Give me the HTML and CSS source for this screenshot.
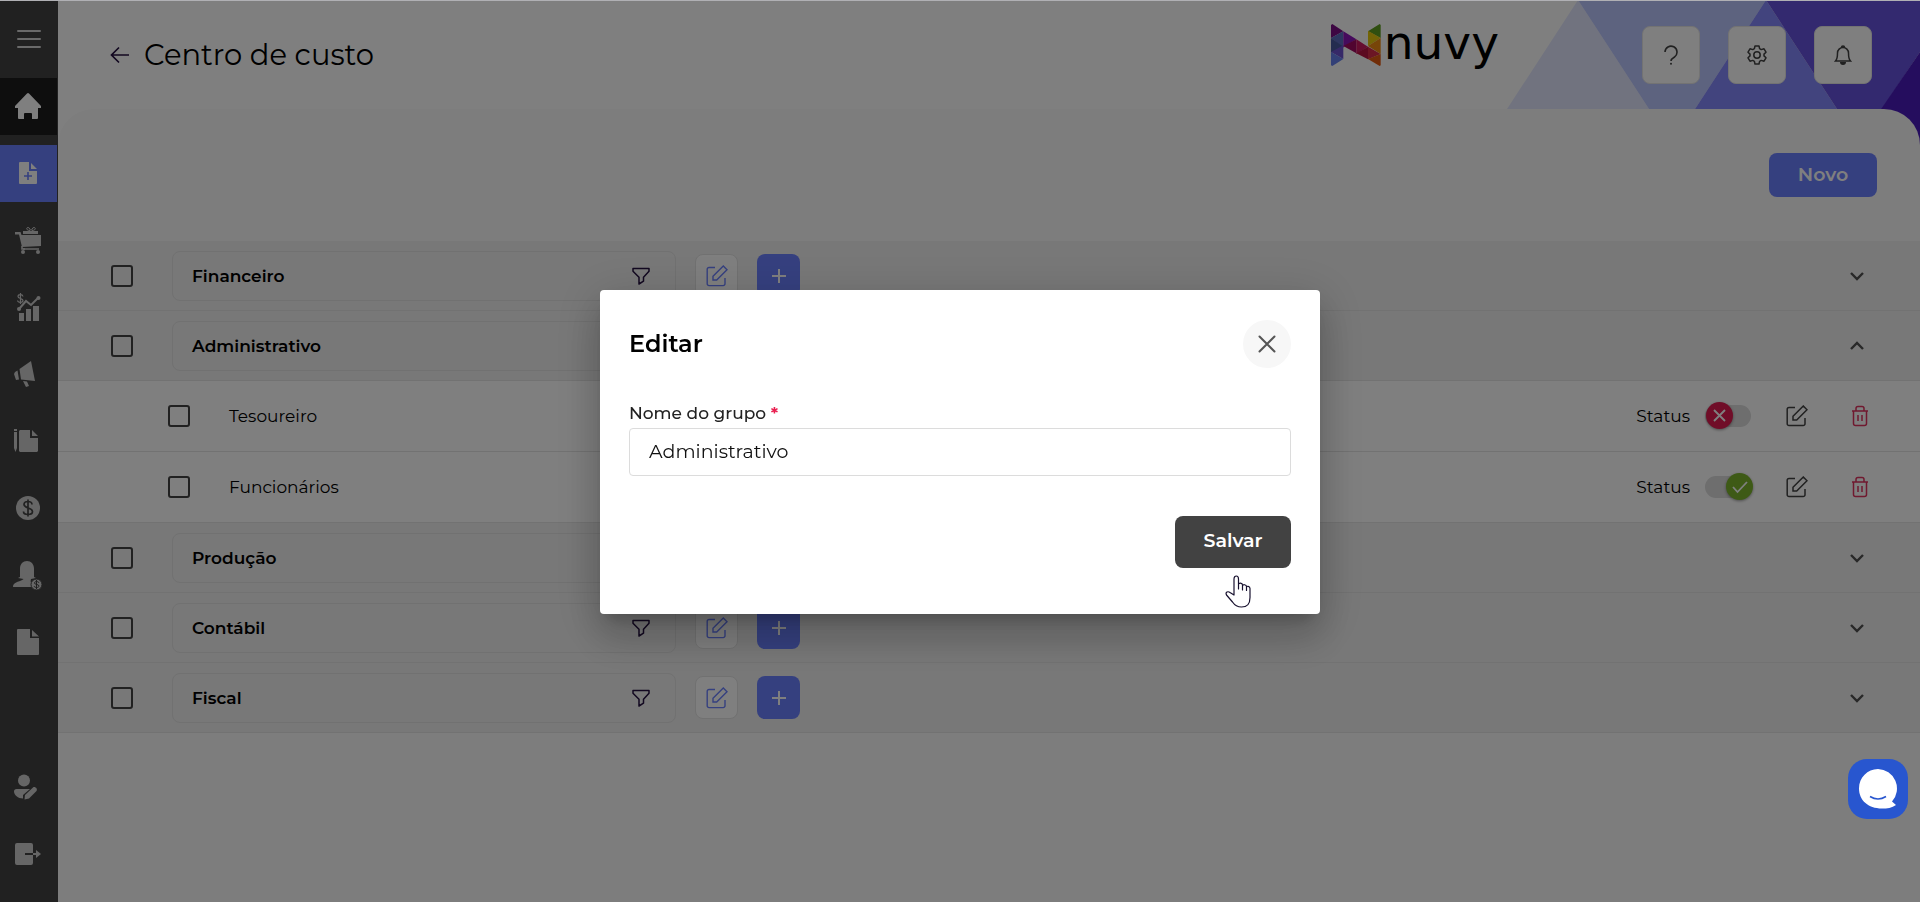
FILE: index.html
```
<!DOCTYPE html>
<html lang="pt-BR">
<head>
<meta charset="utf-8">
<meta name="viewport" content="width=device-width, initial-scale=1">
<title>Centro de custo</title>
<link rel="stylesheet" href="styles.css">
</head>
<body>
<svg class="defs" aria-hidden="true">
  <symbol id="i-edit" viewBox="0 0 22 22"><path d="M9 2.500H3a1.800 1.800 0 0 0-1.800 1.800v14.500a1.800 1.800 0 0 0 1.800 1.800h14.200a1.800 1.800 0 0 0 1.800-1.800V13M7 11.200 17.300 1l3.700 3.700L10.700 15H7z"/></symbol>
  <symbol id="i-plus" viewBox="0 0 16 16"><path d="M8 1v14M1 8h14"/></symbol>
  <symbol id="i-filter" viewBox="0 0 18 18"><path d="M1 1.500h16v2.700l-5.500 6v4L7 17v-6.800L1 4.200z"/></symbol>
  <symbol id="i-down" viewBox="0 0 16 10"><path d="m2 2 6 6 6-6"/></symbol>
  <symbol id="i-up" viewBox="0 0 16 10"><path d="m2 8 6-6 6 6"/></symbol>
  <symbol id="i-trash" viewBox="0 0 18 22"><path d="M1 6h16M2.500 6v12.500a2 2 0 0 0 2 2h9a2 2 0 0 0 2-2V6M5 5.500V3.500a2 2 0 0 1 2-2h4a2 2 0 0 1 2 2v2M7 10v6M11 10v6"/></symbol>
</svg>

<div class="app">
  <nav class="side" aria-label="Menu principal">
    <button class="menu" aria-label="Abrir menu"><svg width="24" height="20" viewBox="0 0 24 20"><path d="M1 2h22M1 10h22M1 18h22" stroke="currentColor" stroke-width="2" stroke-linecap="round"/></svg></button>
    <a class="item home" href="#" aria-label="Início"><svg width="28" height="28" viewBox="0 0 28 28"><path d="M13 1.500a1.500 1.500 0 0 1 2 0L27 14v2h-3v10a1 1 0 0 1-1 1h-5v-5a1 1 0 0 0-1-1h-6a1 1 0 0 0-1 1v5H5a1 1 0 0 1-1-1V16H1v-2z"/></svg></a>
    <a class="item current" href="#" aria-label="Cadastros"><svg width="20" height="24" viewBox="0 0 20 24"><path fill-rule="evenodd" d="M2 1h9v9h8v12a1 1 0 0 1-1 1H2a1 1 0 0 1-1-1V2a1 1 0 0 1 1-1zm7.200 10v3.200H6v1.600h3.200V19h1.600v-3.200H14v-1.600h-3.200V11zM13 2l6 6h-6z"/></svg></a>
    <a class="item" href="#" aria-label="Compras"><svg width="28" height="28" viewBox="0 0 28 28"><path d="M1 6h5.500l1 3H27v11l-19 1-3-12.500H1zM9 5h15v3H9z"/><path d="M8 20v3h17M10 24v-2" fill="none" stroke="currentColor" stroke-width="1.600"/><circle cx="9" cy="26" r="2"/><circle cx="24" cy="26" r="2"/><path d="M16 4.500c-4 0-4-3-2-3s2 3 3 3 1-3 3-3 2 3-2 3" fill="none" stroke="currentColor"/></svg></a>
    <a class="item" href="#" aria-label="Relatórios"><svg width="26" height="28" viewBox="0 0 26 28"><path d="M4 20h5v8H4zM11 16h5v12h-5zM18 13h6v15h-6z"/><path d="m4 16 7-8 5 4 7-7" fill="none" stroke="currentColor" stroke-width="2"/><circle cx="4" cy="16" r="2"/><circle cx="23.500" cy="5" r="2"/><path d="M8 3.500C7.500 1 3 1 3 3.500S8 5 8 7.500 3 10 2.500 7.500M5.500 0v11" fill="none" stroke="currentColor" stroke-width="1.200"/></svg></a>
    <a class="item left" href="#" aria-label="Marketing"><svg width="22" height="28" viewBox="0 0 22 28"><path d="M17 1 21 21l-14-1.500L5.500 9zM1 12l2.500-1.500L5 19.500l-3 .5L0 14zM9 21l4 .5 2 4.500-3 1z"/></svg></a>
    <a class="item left" href="#" aria-label="Documentos"><svg width="26" height="24" viewBox="0 0 26 24"><path d="M0 3h3v16l-1.500 4L0 19zM0 0h3v2H0zM6 1h10v8h8v13l-1 1H6l-1-1V2zM18 1l6 6h-6z"/></svg></a>
    <a class="item" href="#" aria-label="Financeiro"><svg width="24" height="24" viewBox="0 0 24 24"><circle cx="12" cy="12" r="12"/><path d="M16 8.500C16 4.500 8 4.500 8 8.500s8.500 3 8.500 7-9 4-9 0M12 3.500v17" fill="none" stroke="#424242" stroke-width="1.700"/></svg></a>
    <a class="item" href="#" aria-label="Folha de pagamento"><svg width="30" height="30" viewBox="0 0 30 30"><path d="M7 17V8.500C7 4 10 1 14 1s7 3 7 7.500V17l2 1-5 1-.5 2.500L21 24v3H0c0-5 5-4.500 10-7.500L10.500 19 5 18z"/><circle cx="23.500" cy="24.500" r="5.500" stroke="#424242" stroke-width="1"/><path d="M26 23c-.5-2-4.500-2-4.500 0s4.500 1 4.500 3-4.500 2-5 0M23.500 20v9" fill="none" stroke="#424242"/></svg></a>
    <a class="item" href="#" aria-label="Arquivos"><svg width="24" height="26" viewBox="0 0 24 26"><path d="M2 0h12v9h9v16a1 1 0 0 1-1 1H2a1 1 0 0 1-1-1V1a1 1 0 0 1 1-1zM16 1l7 6.500h-7z"/></svg></a>
    <a class="item left push" href="#" aria-label="Perfil"><svg width="24" height="26" viewBox="0 0 24 26"><circle cx="10" cy="6.500" r="6"/><path d="M2.500 15H16l-7 6v3.500C4 24.500 0 21 0 17.500A2.500 2.500 0 0 1 2.500 15z"/><path d="m11 21 8-7.500c2-1.500 5 1.500 3.500 3.500L15 24.500l-4.500 1z"/></svg></a>
    <a class="item" href="#" aria-label="Sair"><svg width="26" height="24" viewBox="0 0 26 24"><path d="M2 1h14a2 2 0 0 1 2 2v8h-8v2h8v8a2 2 0 0 1-2 2H2a2 2 0 0 1-2-2V3a2 2 0 0 1 2-2zM18 11h3V8l5 4-5 4v-3h-3z"/></svg></a>
  </nav>

  <div class="page">
    <header class="top">
      <svg class="deco" width="413" height="160" viewBox="0 0 413 160" aria-hidden="true"><path fill="#e3e7fe" d="M71 0l71 109H0z"/><path fill="#bbc6fe" d="M71 0h188l-71 109h-46z"/><path fill="#8488fc" d="M259 0l71 109H188z"/><path fill="#6652de" d="M259 0h154v52l-38 57h-45z"/><path fill="#4a1abc" d="M413 52v108l-60-20z"/></svg>
      <a class="back" href="#" aria-label="Voltar"><svg width="20" height="18" viewBox="0 0 20 18"><path d="M9 1.500 1.500 9 9 16.500M1.500 9H19" fill="none" stroke="#241040" stroke-width="1.700"/></svg></a>
      <h1>Centro de custo</h1>
      <a class="logo" href="#">
        <svg width="50" height="42" viewBox="0 0 150 126" aria-hidden="true"><path fill="#7c0f86" d="M4 0 37 22 0 42V3z"/><path fill="#5c6cc0" d="M0 42 37 22v50z"/><path fill="#46589f" d="M0 42 37 68 0 86z"/><path fill="#6c52d0" d="M37 64v41L0 84z"/><path fill="#6680ee" d="m0 84 37 21-33 21-4-2z"/><path fill="#8d14b8" d="m37 22 39 24-39 24z"/><path fill="#a30b60" d="M37 66 76 46v42z"/><path fill="#cc1a60" d="m76 46 35 22-35 22z"/><path fill="#b91440" d="m76 88 35-20v38z"/><path fill="#d82c48" d="m111 68 38 22-38 16z"/><path fill="#5f9e20" d="M111 22 146 0l3 3v39z"/><path fill="#e6c80c" d="M111 20v46l38-24z"/><path fill="#ef8a10" d="m111 66 38-24v48z"/><path fill="#e35a10" d="M149 90v34l-3 2-35-21z"/></svg>
        <span>nuvy</span>
      </a>
      <div class="tools">
        <button aria-label="Ajuda"><svg width="16" height="20" viewBox="0 0 16 20"><path d="M2 7a6 6 0 1 1 9.500 5C9 13.500 8 14 8 16" fill="none" stroke="#424242" stroke-width="1.600"/><circle cx="8" cy="18.700" r="1" fill="#424242"/></svg></button>
        <button aria-label="Configurações"><svg width="20" height="20" viewBox="0 0 20 20" fill="none" stroke="#424242" stroke-width="1.500" stroke-linejoin="round"><path d="M8 1h4l.6 2.700 1.600.9L17 3.800l2 3.400-2 1.900v1.800l2 1.900-2 3.400-2.800-.8-1.600.9L12 19H8l-.6-2.700-1.600-.9-2.800.8-2-3.400 2-1.900V9.100L1 7.200l2-3.400 2.800.8 1.600-.9z"/><circle cx="10" cy="10" r="3.200"/></svg></button>
        <button aria-label="Notificações"><svg width="18" height="20" viewBox="0 0 18 20" fill="none" stroke="#424242" stroke-width="1.500"><path d="M1.500 16c2-2 2-4 2-8a5.500 5.500 0 0 1 11 0c0 4 0 6 2 8zM7.500 2.500a1.500 1.500 0 0 1 3 0"/><path d="M6 17h6a3 3 0 0 1-6 0z" fill="#424242" stroke="none"/></svg></button>
      </div>
    </header>

    <main class="panel">
      <div class="bar"><button class="new">Novo</button></div>
      <ul class="rows">
        <li class="row group">
          <input type="checkbox" aria-label="Selecionar Financeiro">
          <div class="name"><span>Financeiro</span><button aria-label="Filtrar"><svg width="18" height="18"><use href="#i-filter"/></svg></button></div>
          <button class="sq edit" aria-label="Editar"><svg width="22" height="22"><use href="#i-edit"/></svg></button>
          <button class="sq add" aria-label="Adicionar"><svg width="16" height="16"><use href="#i-plus"/></svg></button>
          <button class="fold" aria-label="Expandir"><svg width="16" height="10"><use href="#i-down"/></svg></button>
        </li>
        <li class="row group">
          <input type="checkbox" aria-label="Selecionar Administrativo">
          <div class="name"><span>Administrativo</span><button aria-label="Filtrar"><svg width="18" height="18"><use href="#i-filter"/></svg></button></div>
          <button class="sq edit" aria-label="Editar"><svg width="22" height="22"><use href="#i-edit"/></svg></button>
          <button class="sq add" aria-label="Adicionar"><svg width="16" height="16"><use href="#i-plus"/></svg></button>
          <button class="fold" aria-label="Recolher"><svg width="16" height="10"><use href="#i-up"/></svg></button>
        </li>
        <li class="row child">
          <input type="checkbox" id="c1"><label class="cname" for="c1">Tesoureiro</label>
          <label class="status" for="s1">Status</label>
          <span class="switch off"><input type="checkbox" id="s1"><svg class="knob" width="27" height="27" viewBox="0 0 27 27" aria-hidden="true"><path d="m8 8 11 11M19 8 8 19"/></svg></span>
          <button class="act" aria-label="Editar"><svg width="22" height="22"><use href="#i-edit"/></svg></button>
          <button class="act del" aria-label="Excluir"><svg width="18" height="22"><use href="#i-trash"/></svg></button>
        </li>
        <li class="row child">
          <input type="checkbox" id="c2"><label class="cname" for="c2">Funcionários</label>
          <label class="status" for="s2">Status</label>
          <span class="switch on"><input type="checkbox" id="s2" checked><svg class="knob" width="27" height="27" viewBox="0 0 27 27" aria-hidden="true"><path d="m7 14 4.500 5L21 9"/></svg></span>
          <button class="act" aria-label="Editar"><svg width="22" height="22"><use href="#i-edit"/></svg></button>
          <button class="act del" aria-label="Excluir"><svg width="18" height="22"><use href="#i-trash"/></svg></button>
        </li>
        <li class="row group">
          <input type="checkbox" aria-label="Selecionar Produção">
          <div class="name"><span>Produção</span><button aria-label="Filtrar"><svg width="18" height="18"><use href="#i-filter"/></svg></button></div>
          <button class="sq edit" aria-label="Editar"><svg width="22" height="22"><use href="#i-edit"/></svg></button>
          <button class="sq add" aria-label="Adicionar"><svg width="16" height="16"><use href="#i-plus"/></svg></button>
          <button class="fold" aria-label="Expandir"><svg width="16" height="10"><use href="#i-down"/></svg></button>
        </li>
        <li class="row group">
          <input type="checkbox" aria-label="Selecionar Contábil">
          <div class="name"><span>Contábil</span><button aria-label="Filtrar"><svg width="18" height="18"><use href="#i-filter"/></svg></button></div>
          <button class="sq edit" aria-label="Editar"><svg width="22" height="22"><use href="#i-edit"/></svg></button>
          <button class="sq add" aria-label="Adicionar"><svg width="16" height="16"><use href="#i-plus"/></svg></button>
          <button class="fold" aria-label="Expandir"><svg width="16" height="10"><use href="#i-down"/></svg></button>
        </li>
        <li class="row group">
          <input type="checkbox" aria-label="Selecionar Fiscal">
          <div class="name"><span>Fiscal</span><button aria-label="Filtrar"><svg width="18" height="18"><use href="#i-filter"/></svg></button></div>
          <button class="sq edit" aria-label="Editar"><svg width="22" height="22"><use href="#i-edit"/></svg></button>
          <button class="sq add" aria-label="Adicionar"><svg width="16" height="16"><use href="#i-plus"/></svg></button>
          <button class="fold" aria-label="Expandir"><svg width="16" height="10"><use href="#i-down"/></svg></button>
        </li>
      </ul>
    </main>
  </div>
</div>

<div class="overlay">
  <form class="modal" role="dialog" aria-labelledby="dlg">
    <div class="mhead">
      <h2 id="dlg">Editar</h2>
      <button type="button" class="close" aria-label="Fechar"><svg width="18" height="18" viewBox="0 0 18 18"><path d="m1.500 1.500 15 15M16.500 1.500l-15 15" stroke="#555" stroke-width="2" stroke-linecap="round"/></svg></button>
    </div>
    <label class="flabel" for="grp">Nome do grupo <b>*</b></label>
    <input class="field" id="grp" type="text" value="Administrativo">
    <div class="mfoot">
      <button type="button" class="save">Salvar</button>
      <svg class="cursor" width="26" height="34" viewBox="0 0 26 34" aria-hidden="true"><path d="M9 20V4c0-4 4.500-4 4.500 0v10V9.500c0-2 4-2 4 .5v5-4c0-2 4-1.500 4 .5v4-3c0-2 3.500-1.500 3.500 1v9c0 7-3 9.500-8.500 9.500-5 0-7-2-9-5L1.500 20c-1.500-3 1.500-4 3.500-2.500z" fill="#fff" stroke="#17102e" stroke-width="1.200" stroke-linejoin="round"/></svg>
    </div>
  </form>
</div>

<button class="chat" aria-label="Abrir chat"><svg width="40" height="40" viewBox="0 0 40 40"><path d="M20 0a19.500 19.500 0 0 1 14 32.500L38 36c-4 3-9 3.500-14 3.500C10 39.500 1 31 1 19.500 1 8.500 9.500 0 20 0z" fill="#fff"/><path d="M12 27.500q8 5 16 0" fill="none" stroke="#2856cf" stroke-width="1.500"/></svg></button>
</body>
</html>
```
FILE: styles.css
```
* { box-sizing: border-box; }
body { margin: 0; font-family: Montserrat, Inter, "Open Sans", sans-serif; color: #000; background: #fafafa; }
button { font: inherit; border: 0; padding: 0; background: none; color: inherit; display: flex; align-items: center; justify-content: center; cursor: pointer; }
h1, h2, ul { margin: 0; padding: 0; font-weight: 400; }
svg { display: block; flex: none; }
.defs { position: absolute; width: 0; height: 0; }

.app { display: flex; min-height: 100vh; }

.side { width: 58px; flex: none; background: #424242; color: #ccc; display: flex; flex-direction: column; gap: 10px; padding: 0 1px 19px 0; }
.side svg { fill: currentColor; }
.menu { height: 68px; padding-top: 10px; color: #d4d4d4; }
.item { height: 57px; display: flex; align-items: center; justify-content: center; color: inherit; padding: 0 2px 2px 0; }
.item.home { background: #1c1c1c; color: #fff; }
.item.current { background: #6b80fe; color: #fff; }
.item.left { justify-content: flex-start; padding-left: 14px; }
.item.push { margin-top: auto; }

.page { flex: 1; min-width: 0; display: flex; flex-direction: column; background: #fff; }
.top { position: relative; height: 109px; flex: none; display: flex; align-items: center; padding: 0 48px 0 52px; }
.deco { position: absolute; right: 0; top: 0; }
.back { display: flex; width: 34px; }
h1 { font-size: 29px; line-height: 40px; }
.logo { display: flex; align-items: flex-start; gap: 3px; height: 62px; margin-left: auto; margin-right: 143px; color: #000; text-decoration: none; }
.logo span { font-family: "DejaVu Sans", sans-serif; font-size: 47px; line-height: 38px; }
.tools { position: relative; display: flex; gap: 28px; }
.tools button { width: 58px; height: 58px; background: #fff; border: 1px solid #e6e6e6; border-radius: 8px; }

.panel { position: relative; flex: 1; background: #fafafa; border-radius: 36px 36px 0 0; }
.bar { display: flex; justify-content: flex-end; padding: 44px 43px; height: 132px; }
.new { width: 108px; height: 44px; padding-bottom: 2px; background: #6b80fe; color: #fff; border-radius: 8px; font-size: 19px; font-weight: 600; }

.rows { list-style: none; }
.row { display: flex; align-items: center; border-bottom: 1px solid #e4e4e4; padding: 0 52px 0 53px; }
.row > input { appearance: none; flex: none; width: 22px; height: 22px; margin: 0; border: 2px solid #424242; border-radius: 3px; }
.group { height: 70px; background: #f0f0f0; }
.name { width: 504px; height: 50px; margin-left: 39px; padding: 0 25px 0 19px; border: 1px solid #e2e2e2; border-radius: 8px; display: flex; align-items: center; justify-content: space-between; font-size: 17px; font-weight: 600; }
.name svg { fill: none; stroke: #241040; stroke-width: 1.5; stroke-linejoin: round; }
.sq { width: 43px; height: 43px; border-radius: 8px; margin-left: 19px; }
.edit { background: #fff; border: 1px solid #e2e2e2; }
.edit svg { fill: none; stroke: #6b80fe; stroke-width: 1.4; }
.add { background: #6b80fe; }
.add svg { stroke: #fff; stroke-width: 2; }
.fold { margin-left: auto; width: 22px; height: 22px; }
.fold svg { fill: none; stroke: #505050; stroke-width: 2.4; }

.child { height: 71px; background: #fff; padding: 0 51px 0 110px; }
.cname { margin-left: 39px; font-size: 17px; }
.status { margin-left: auto; font-size: 17px; }
.switch { position: relative; width: 46px; height: 22px; margin: 0 35px 0 15px; }
.switch input { appearance: none; display: block; width: 46px; height: 22px; margin: 0; border-radius: 11px; background: #dcdcdc; }
.knob { position: absolute; top: -3px; border-radius: 50%; fill: none; stroke: #fff; stroke-width: 1.8; box-shadow: 0 1px 3px rgba(0,0,0,.4); pointer-events: none; }
.off .knob { left: 1px; background: #e01b50; }
.on .knob { right: -2px; background: #7cb52c; }
.act svg { fill: none; stroke: #424242; stroke-width: 1.5; }
.del { margin-left: 43px; }
.del svg { stroke: #e0335f; }

.overlay { position: fixed; inset: 0; display: flex; align-items: center; justify-content: center; background: rgba(0,0,0,.5); border-top: 1px solid #b0b0b4; }
.modal { width: 720px; max-width: 80vw; padding: 30px 29px 46px; background: #fff; border-radius: 4px; display: flex; flex-direction: column; box-shadow: 0 11px 15px -7px rgba(0,0,0,.2), 0 24px 38px 3px rgba(0,0,0,.14), 0 9px 46px 8px rgba(0,0,0,.12); }
.mhead { display: flex; align-items: center; justify-content: space-between; }
h2 { font-size: 24px; line-height: 32px; font-weight: 600; }
.close { width: 48px; height: 48px; border-radius: 50%; background: #f7f7f7; }
.flabel { margin: 34px 0 4px; font-size: 17px; line-height: 22px; font-weight: 500; color: #222; }
.flabel b { color: #e91e4f; }
.field { height: 48px; padding: 0 19px; border: 1px solid #dcdcdc; border-radius: 4px; font: inherit; font-size: 19px; color: #111; outline: 0; width: 100%; }
.mfoot { position: relative; display: flex; justify-content: flex-end; margin-top: 40px; }
.save { width: 116px; height: 52px; padding-bottom: 2px; background: #424242; color: #fff; border-radius: 8px; font-size: 19px; font-weight: 600; }
.cursor { position: absolute; right: 40px; top: 59px; }

.chat { position: fixed; right: 12px; bottom: 83px; width: 60px; height: 60px; border-radius: 19px; background: #2856cf; }
```
